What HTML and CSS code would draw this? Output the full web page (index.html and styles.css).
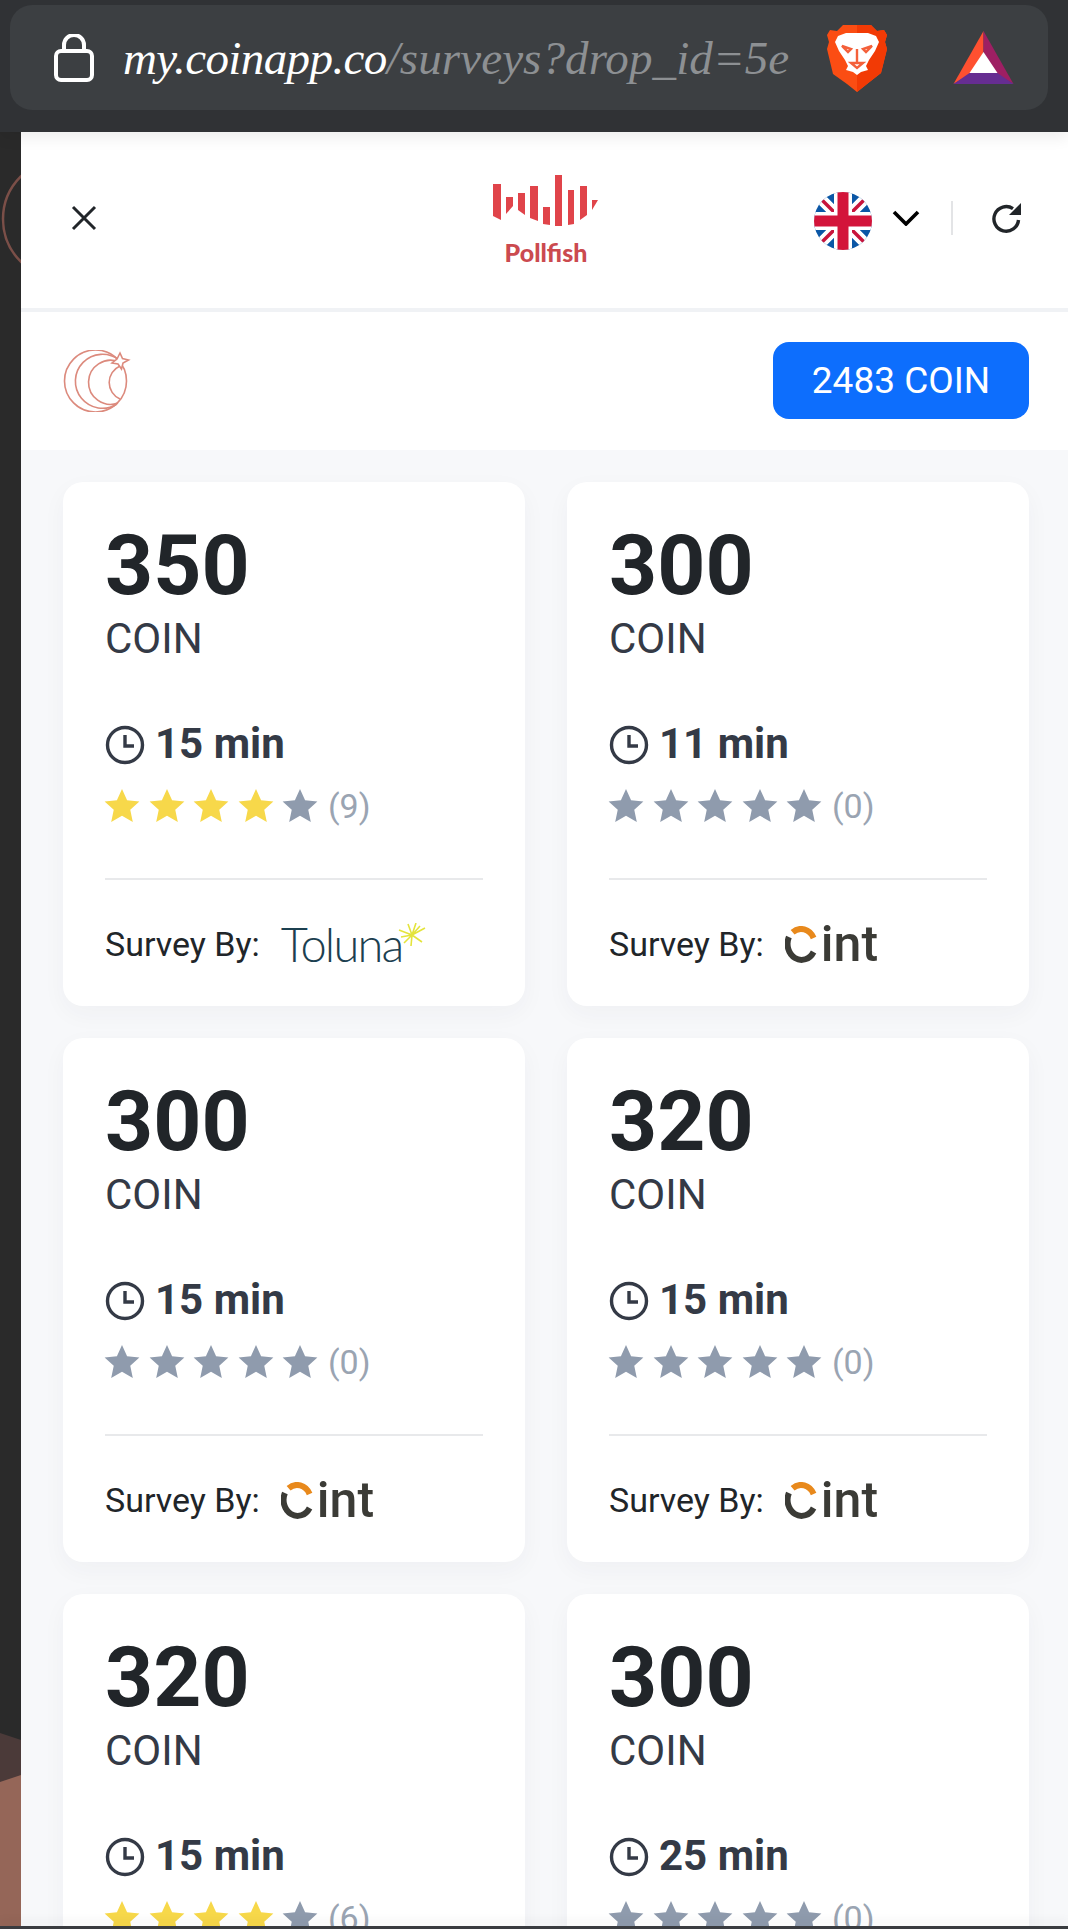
FILE: index.html
```html
<!DOCTYPE html>
<html lang="en">
<head>
  <meta charset="UTF-8" />
  <meta name="viewport" content="width=device-width, initial-scale=1.0" />
  <title>Surveys</title>
  <link rel="stylesheet" href="styles.css">
</head>
<body>
  <svg class="sprites" width="0" height="0">
    <symbol id="star" viewBox="0 0 24 24">
      <polygon points="12,0.6 15.4,8.1 23.6,9 17.5,14.5 19.2,22.6 12,18.5 4.8,22.6 6.5,14.5 0.4,9 8.6,8.1" />
    </symbol>
    <symbol id="clock" viewBox="0 0 40 40">
      <circle cx="20" cy="20" r="17.5" fill="none" stroke="#343a46" stroke-width="3.4" />
      <path d="M20 10v11h9" fill="none" stroke="#343a46" stroke-width="3.4" />
    </symbol>
    <symbol id="cring" viewBox="0 0 32 38">
      <path d="M28.6 12A14 16 0 0 0 7.6 6.2" fill="none" stroke="#e8891c" stroke-width="6" />
      <path d="M3.9 11A14 16 0 0 0 28.6 26" fill="none" stroke="#3b3b36" stroke-width="6" />
    </symbol>
    <symbol id="spark" viewBox="0 0 28 24">
      <path d="M14 12L10 1M14 12L18 0M14 12L27 5M14 12L24 19M14 12L13 23M14 12L6 20M14 12L1 7M14 12L22 3M14 12L3 14" fill="none" stroke="#e4e43c" stroke-width="1.6" />
    </symbol>
  </svg>

  <div class="topbar">
    <div class="urlbox">
      <svg class="lock" viewBox="0 0 40 48">
        <rect x="2" y="17" width="36" height="29" rx="5" fill="none" stroke="#fff" stroke-width="4" />
        <path d="M10 17V11a10 10 0 0 1 20 0v6" fill="none" stroke="#fff" stroke-width="4" />
      </svg>
      <div class="url"><span class="host">my.coinapp.co</span>/surveys?drop_id=5e</div>
      <svg class="brave" viewBox="0 0 60 68">
        <path d="M16 1h28l6 6 7-1 3 5-2 7 2 7-6 24-14 11-10 8-10-8L6 50 0 25l2-7-2-7 3-5 7 1z" fill="#fb4d13" />
        <path d="M30 1h14l6 6 7-1 3 5-2 7 2 7-6 24-14 11-10 8z" fill="#f23a05" />
        <path d="M19 9h22l8 3 3 6-4 9-6 9-3 6 2 4-7 2-4 3-4-3-7-2 2-4-3-6-6-9-4-9 3-6z" fill="#fff" />
        <path d="M15 22l9 3-3 3zM45 22l-9 3 3 3zM30 25v14M24 39h12l-6 5z" fill="none" stroke="#f4603a" stroke-width="2.4" />
      </svg>
      <svg class="bat" viewBox="0 0 60 54">
        <polygon points="30,0 0,53 19,42 30,21" fill="#ff5030" />
        <polygon points="30,0 60,53 41,42 30,21" fill="#9e1f63" />
        <polygon points="0,53 60,53 44,42 16,42" fill="#662d91" />
        <polygon points="30,21 44,42 16,42" fill="#fff" />
      </svg>
    </div>
  </div>

  <div class="page">
    <div class="backdrop">
      <svg viewBox="0 0 21 1797" width="21" height="1797">
        <circle cx="63" cy="87" r="60" fill="none" stroke="#7b4f48" stroke-width="2.5" />
        <polygon points="0,1601 21,1608 21,1797 0,1797" fill="#4b3a39" />
        <polygon points="0,1650 21,1643 21,1797 0,1797" fill="#956658" />
      </svg>
    </div>

    <div class="modal">
      <header class="modal-header">
        <svg class="close" viewBox="0 0 28 28">
          <path d="M3 3l22 22M25 3L3 25" fill="none" stroke="#212529" stroke-width="3" />
        </svg>
        <div class="pollfish">
          <svg viewBox="0 0 106 53" width="106" height="53">
            <polygon points="0,10 8,10 8,46 0,42" />
            <polygon points="13,23 20,23 20,32 13,40" />
            <polygon points="25,19 32,19 32,41 25,36" />
            <polygon points="37,12 45,12 45,47 37,44" />
            <polygon points="50,33 57,33 57,51 50,50" />
            <polygon points="62,1 69,1 69,52 62,52" />
            <polygon points="75,16 81,16 81,50 75,51" />
            <polygon points="87,12 94,12 94,41 87,46" />
            <polygon points="99,26 105,26 99,36" />
          </svg>
          <span class="pollfish-name">Pollfish</span>
        </div>
        <div class="header-actions">
          <svg class="flag" viewBox="0 0 58 58">
            <defs><clipPath id="flag-clip"><circle cx="29" cy="29" r="29" /></clipPath></defs>
            <g clip-path="url(#flag-clip)">
              <rect width="58" height="58" fill="#0b57a6" />
              <path d="M0 0l58 58M58 0L0 58" stroke="#fff" stroke-width="11" />
              <path d="M5 5l19 19M53 5L34 24M5 53l19-19M53 53L34 34" stroke="#c8143c" stroke-width="3.5" />
              <path d="M29 0v58M0 29h58" stroke="#fff" stroke-width="18" />
              <path d="M29 0v58M0 29h58" stroke="#d3143a" stroke-width="11" />
            </g>
          </svg>
          <svg class="chevron" viewBox="0 0 28 16">
            <path d="M2 2l12 12L26 2" fill="none" stroke="#000" stroke-width="3.6" />
          </svg>
          <span class="vline"></span>
          <svg class="refresh" viewBox="0 0 30 30">
            <path d="M26.5 17A12.3 12.3 0 1 1 21 5.6" fill="none" stroke="#212529" stroke-width="3.4" />
            <polygon points="29,0 29,12 17,12" fill="#212529" />
          </svg>
        </div>
      </header>

      <div class="subheader">
        <svg class="coin-logo" viewBox="0 0 68 62">
          <g fill="none" stroke="#dc8a7d" stroke-width="1.6">
            <circle cx="32.5" cy="31" r="31" />
            <path d="M56 10A27 27 0 1 0 54 54" />
            <path d="M56 12A22 22 0 1 0 55 53" />
            <path d="M57 16A18 18 0 0 0 57 49" />
            <polygon points="57,3 59.5,8.5 65.5,10 60,13 58.5,19 55,14 49,13 54,9" fill="#fff" />
          </g>
        </svg>
        <div class="balance">2483 COIN</div>
      </div>

      <main class="survey-grid">
        <article class="card">
          <div class="price">350</div>
          <div class="unit">COIN</div>
          <div class="time"><svg class="clock"><use href="#clock" /></svg>15 min</div>
          <div class="rating">
            <svg class="star on"><use href="#star" /></svg><svg class="star on"><use href="#star" /></svg><svg class="star on"><use href="#star" /></svg><svg class="star on"><use href="#star" /></svg><svg class="star"><use href="#star" /></svg>
            <span class="count">(9)</span>
          </div>
          <div class="by">
            <span>Survey By:</span>
            <span class="toluna">Toluna<svg class="spark"><use href="#spark" /></svg></span>
          </div>
        </article>

        <article class="card">
          <div class="price">300</div>
          <div class="unit">COIN</div>
          <div class="time"><svg class="clock"><use href="#clock" /></svg>11 min</div>
          <div class="rating">
            <svg class="star"><use href="#star" /></svg><svg class="star"><use href="#star" /></svg><svg class="star"><use href="#star" /></svg><svg class="star"><use href="#star" /></svg><svg class="star"><use href="#star" /></svg>
            <span class="count">(0)</span>
          </div>
          <div class="by">
            <span>Survey By:</span>
            <span class="cint"><svg class="cring"><use href="#cring" /></svg>int</span>
          </div>
        </article>

        <article class="card">
          <div class="price">300</div>
          <div class="unit">COIN</div>
          <div class="time"><svg class="clock"><use href="#clock" /></svg>15 min</div>
          <div class="rating">
            <svg class="star"><use href="#star" /></svg><svg class="star"><use href="#star" /></svg><svg class="star"><use href="#star" /></svg><svg class="star"><use href="#star" /></svg><svg class="star"><use href="#star" /></svg>
            <span class="count">(0)</span>
          </div>
          <div class="by">
            <span>Survey By:</span>
            <span class="cint"><svg class="cring"><use href="#cring" /></svg>int</span>
          </div>
        </article>

        <article class="card">
          <div class="price">320</div>
          <div class="unit">COIN</div>
          <div class="time"><svg class="clock"><use href="#clock" /></svg>15 min</div>
          <div class="rating">
            <svg class="star"><use href="#star" /></svg><svg class="star"><use href="#star" /></svg><svg class="star"><use href="#star" /></svg><svg class="star"><use href="#star" /></svg><svg class="star"><use href="#star" /></svg>
            <span class="count">(0)</span>
          </div>
          <div class="by">
            <span>Survey By:</span>
            <span class="cint"><svg class="cring"><use href="#cring" /></svg>int</span>
          </div>
        </article>

        <article class="card">
          <div class="price">320</div>
          <div class="unit">COIN</div>
          <div class="time"><svg class="clock"><use href="#clock" /></svg>15 min</div>
          <div class="rating">
            <svg class="star on"><use href="#star" /></svg><svg class="star on"><use href="#star" /></svg><svg class="star on"><use href="#star" /></svg><svg class="star on"><use href="#star" /></svg><svg class="star"><use href="#star" /></svg>
            <span class="count">(6)</span>
          </div>
        </article>

        <article class="card">
          <div class="price">300</div>
          <div class="unit">COIN</div>
          <div class="time"><svg class="clock"><use href="#clock" /></svg>25 min</div>
          <div class="rating">
            <svg class="star"><use href="#star" /></svg><svg class="star"><use href="#star" /></svg><svg class="star"><use href="#star" /></svg><svg class="star"><use href="#star" /></svg><svg class="star"><use href="#star" /></svg>
            <span class="count">(0)</span>
          </div>
        </article>
      </main>
    </div>
  </div>

  <div class="nav-edge"></div>
</body>
</html>
```

FILE: styles.css
```css
html, body {
  margin: 0;
  height: 1929px;
  overflow: hidden;
}

body {
  position: relative;
  font-family: Roboto, "Liberation Sans", sans-serif;
  background-color: #2a2a2a;
}

.sprites {
  position: absolute;
}

/* browser address bar */
.topbar {
  position: relative;
  z-index: 2;
  height: 132px;
  box-sizing: border-box;
  padding: 5px 20px 22px 10px;
  background-color: #303235;
  box-shadow: 0 6px 14px rgba(0, 0, 0, 0.07);
}

.urlbox {
  display: flex;
  align-items: center;
  height: 105px;
  padding-left: 44px;
  box-sizing: border-box;
  border-radius: 22px;
  background-color: #3c3f42;
}

.lock {
  width: 40px;
  height: 48px;
  flex: none;
}

.url {
  width: 671px;
  margin-left: 29px;
  flex: none;
  overflow: hidden;
  white-space: nowrap;
  font-family: "Liberation Serif", serif;
  font-style: italic;
  font-size: 47px;
  letter-spacing: 0.1px;
  color: #8d9093;
}

.host {
  letter-spacing: -0.6px;
  color: #fff;
}

.brave {
  width: 60px;
  height: 68px;
  margin-left: 33px;
  flex: none;
}

.bat {
  width: 61px;
  height: 54px;
  margin-left: 66px;
  flex: none;
}

/* page under the bar */
.page {
  display: flex;
  height: 1797px;
}

.backdrop {
  width: 21px;
  flex: none;
}

.backdrop svg {
  display: block;
}

.modal {
  flex: 1;
  min-width: 0;
  background-color: #f7f8fa;
}

.modal-header {
  display: grid;
  grid-template-columns: 1fr auto 1fr;
  align-items: center;
  height: 180px;
  box-sizing: border-box;
  padding: 0 46px 4px 49px;
  background-color: #fff;
  border-bottom: 4px solid #f0f2f5;
}

.close {
  width: 28px;
  height: 28px;
}

.pollfish {
  display: flex;
  flex-direction: column;
  align-items: center;
  margin-top: 3px;
}

.pollfish svg {
  fill: #e0444a;
}

.pollfish-name {
  margin-top: 11px;
  font-family: Lato, sans-serif;
  font-weight: 900;
  font-size: 25px;
  line-height: 28px;
  color: #cb4a4f;
}

.header-actions {
  display: flex;
  align-items: center;
  justify-content: flex-end;
}

.flag {
  width: 58px;
  height: 58px;
  margin-top: 5px;
}

.chevron {
  width: 28px;
  height: 16px;
  margin-left: 20px;
}

.vline {
  width: 2px;
  height: 34px;
  margin: 0 39px 0 31px;
  background-color: #e3e4e6;
}

.refresh {
  width: 30px;
  height: 30px;
}

.subheader {
  display: flex;
  align-items: center;
  justify-content: space-between;
  height: 138px;
  padding: 0 39px 0 42px;
  background-color: #fff;
}

.coin-logo {
  width: 68px;
  height: 62px;
}

.balance {
  width: 256px;
  height: 77px;
  margin-top: -2px;
  border-radius: 16px;
  background-color: #0d6efd;
  color: #fff;
  font-size: 37px;
  line-height: 77px;
  text-align: center;
}

/* survey cards */
.survey-grid {
  display: grid;
  grid-template-columns: 462px 462px;
  gap: 32px 42px;
  padding: 32px 39px 0 42px;
}

.card {
  height: 524px;
  box-sizing: border-box;
  padding: 38px 42px 0;
  border-radius: 20px;
  background-color: #fff;
  box-shadow: 0 8px 24px rgba(40, 50, 70, 0.04);
}

.price {
  height: 92px;
  font-size: 84px;
  font-weight: 700;
  line-height: 92px;
  color: #212529;
}

.unit {
  height: 48px;
  margin-top: 3px;
  font-size: 42px;
  line-height: 48px;
  color: #343a46;
}

.time {
  display: flex;
  align-items: center;
  gap: 10px;
  height: 48px;
  margin-top: 57px;
  font-size: 42px;
  font-weight: 700;
  line-height: 48px;
  color: #343a46;
}

.clock {
  width: 40px;
  height: 40px;
  flex: none;
  margin-top: 2px;
}

.rating {
  display: flex;
  align-items: center;
  height: 46px;
  margin-top: 15px;
  padding-bottom: 49px;
  border-bottom: 2px solid #e8e9eb;
}

.star {
  width: 36px;
  height: 36px;
  margin-right: 8.6px;
  fill: #8f9bad;
}

.star:first-child {
  margin-left: -1px;
}

.star.on {
  fill: #f7d84a;
}

.count {
  margin-left: 1px;
  font-size: 34px;
  color: #9aa4b2;
}

.by {
  display: flex;
  align-items: center;
  gap: 21px;
  height: 62px;
  margin-top: 33px;
  font-size: 34px;
  color: #212529;
}

.toluna {
  display: flex;
  align-items: flex-start;
  font-family: Lato, sans-serif;
  font-weight: 300;
  font-size: 47px;
  line-height: 50px;
  letter-spacing: -1.8px;
  color: #1c4050;
}

.spark {
  width: 28px;
  height: 24px;
  margin: 4px 0 0 -4px;
}

.cint {
  display: flex;
  align-items: center;
  font-weight: 500;
  font-size: 50px;
  line-height: 50px;
  color: #3b3b36;
}

.cring {
  width: 32px;
  height: 38px;
  margin: 2px 4px 0 0;
}

/* sliver of the system bar at the very bottom */
.nav-edge {
  position: absolute;
  left: 0;
  right: 0;
  bottom: 0;
  height: 3px;
  background-color: #3a3c40;
  box-shadow: 0 -5px 10px rgba(0, 0, 0, 0.08);
}
```
